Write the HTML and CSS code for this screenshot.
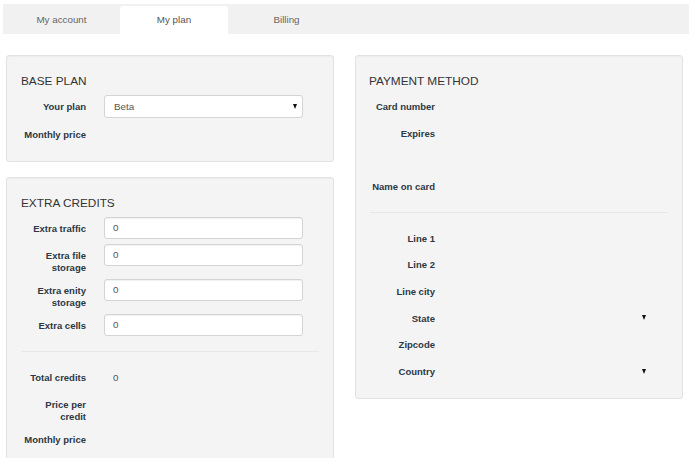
FILE: index.html
```html
<!DOCTYPE html>
<html>
<head>
<meta charset="utf-8">
<link rel="stylesheet" href="styles.css">
</head>
<body>
<nav class="tabs">
  <div class="tab tab-wide">My account</div>
  <div class="tab tab-active">My plan</div>
  <div class="tab tab-wide">Billing</div>
</nav>
<main class="content">
  <div class="col">
    <section class="panel">
      <h4 class="panel-title">BASE PLAN</h4>
      <div class="rows">
        <div class="row">
          <div class="label">Your plan</div>
          <div class="select"><span>Beta</span><span class="caret"></span></div>
        </div>
        <div class="row">
          <div class="label">Monthly price</div>
          <div class="value"></div>
        </div>
      </div>
    </section>
    <section class="panel">
      <h4 class="panel-title">EXTRA CREDITS</h4>
      <div class="rows">
        <div class="row">
          <div class="label">Extra traffic</div>
          <div class="input">0</div>
        </div>
        <div class="row">
          <div class="label">Extra file storage</div>
          <div class="input">0</div>
        </div>
        <div class="row">
          <div class="label">Extra enity storage</div>
          <div class="input">0</div>
        </div>
        <div class="row">
          <div class="label">Extra cells</div>
          <div class="input">0</div>
        </div>
      </div>
      <hr class="divider">
      <div class="rows">
        <div class="row">
          <div class="label">Total credits</div>
          <div class="value">0</div>
        </div>
        <div class="row">
          <div class="label">Price per credit</div>
          <div class="value"></div>
        </div>
        <div class="row">
          <div class="label">Monthly price</div>
          <div class="value"></div>
        </div>
      </div>
    </section>
  </div>
  <div class="col">
    <section class="panel">
      <h4 class="panel-title title-right">PAYMENT METHOD</h4>
      <div class="rows">
        <div class="row">
          <div class="label">Card number</div>
          <div class="value"></div>
        </div>
        <div class="row row-tall">
          <div class="label">Expires</div>
          <div class="value"></div>
        </div>
        <div class="row">
          <div class="label">Name on card</div>
          <div class="value"></div>
        </div>
      </div>
      <hr class="divider">
      <div class="rows">
        <div class="row row-addr">
          <div class="label">Line 1</div>
          <div class="value"></div>
        </div>
        <div class="row row-addr">
          <div class="label">Line 2</div>
          <div class="value"></div>
        </div>
        <div class="row row-addr">
          <div class="label">Line city</div>
          <div class="value"></div>
        </div>
        <div class="row row-addr">
          <div class="label">State</div>
          <div class="select select-bare"><span></span><span class="caret"></span></div>
        </div>
        <div class="row row-addr">
          <div class="label">Zipcode</div>
          <div class="value"></div>
        </div>
        <div class="row row-addr">
          <div class="label">Country</div>
          <div class="select select-bare"><span></span><span class="caret"></span></div>
        </div>
      </div>
    </section>
  </div>
</main>
</body>
</html>
```

FILE: styles.css
```css
* { box-sizing: border-box; }

body {
  margin: 0;
  padding: 4px 6px 0 3px;
  background: #ffffff;
  font-family: "Liberation Sans", Arial, sans-serif;
  color: #333;
}

.tabs {
  display: flex;
  align-items: flex-end;
  height: 30px;
  background: #f1f1f1;
}

.tab {
  height: 28px;
  width: 108px;
  display: flex;
  align-items: center;
  justify-content: center;
  font-size: 9.8px;
  color: #666;
  padding-bottom: 1px;
}

.tab-wide { width: 117px; }

.tab-active {
  background: #ffffff;
  color: #555;
  border-radius: 3px 3px 0 0;
}

.content {
  display: flex;
  gap: 21px;
  padding: 21px 0 0 3px;
}

.col {
  width: 328px;
  display: flex;
  flex-direction: column;
  gap: 15px;
}

.panel {
  background: #f4f4f4;
  border: 1px solid #e2e2e2;
  border-radius: 3px;
  box-shadow: inset 0 1px 1px rgba(0,0,0,0.03);
  padding: 18px 14px 16px 14px;
}

.panel-title {
  margin: 0 0 7px 0;
  font-size: 11.8px;
  line-height: 14px;
  font-weight: normal;
  color: #333;
}

.title-right { margin-left: -1px; }

.rows {
  display: flex;
  flex-direction: column;
  gap: 5px;
}

.row {
  display: grid;
  grid-template-columns: 65px 199px;
  column-gap: 18px;
  min-height: 22px;
}

.row-tall { min-height: 48px; }
.row-addr { min-height: 21.7px; }

.label {
  text-align: right;
  font-weight: bold;
  font-size: 9.5px;
  line-height: 12.25px;
  padding-top: 5.6px;
  color: #2c3843;
}

.value {
  font-size: 9.8px;
  line-height: 12.5px;
  padding-top: 5.5px;
  padding-left: 9px;
  color: #555;
}

.input {
  height: 22px;
  background: #ffffff;
  border: 1px solid #d4d4d4;
  border-radius: 3px;
  box-shadow: inset 0 1px 1px rgba(0,0,0,0.06);
  font-size: 9.8px;
  line-height: 20px;
  padding-left: 8px;
  color: #555;
}

.select {
  height: 23px;
  background: #ffffff;
  border: 1px solid #d4d4d4;
  border-radius: 3px;
  display: flex;
  align-items: center;
  justify-content: space-between;
  font-size: 9.8px;
  padding: 0 5px 0 9px;
  color: #555;
}

.select-bare {
  height: 21.7px;
  background: transparent;
  border-color: transparent;
}

.caret {
  width: 0;
  height: 0;
  border-left: 2.5px solid transparent;
  border-right: 2.5px solid transparent;
  border-top: 5px solid #111;
}

.divider {
  border: 0;
  border-top: 1px solid #e7e7e7;
  margin: 15px 0 14px 0;
}
```
